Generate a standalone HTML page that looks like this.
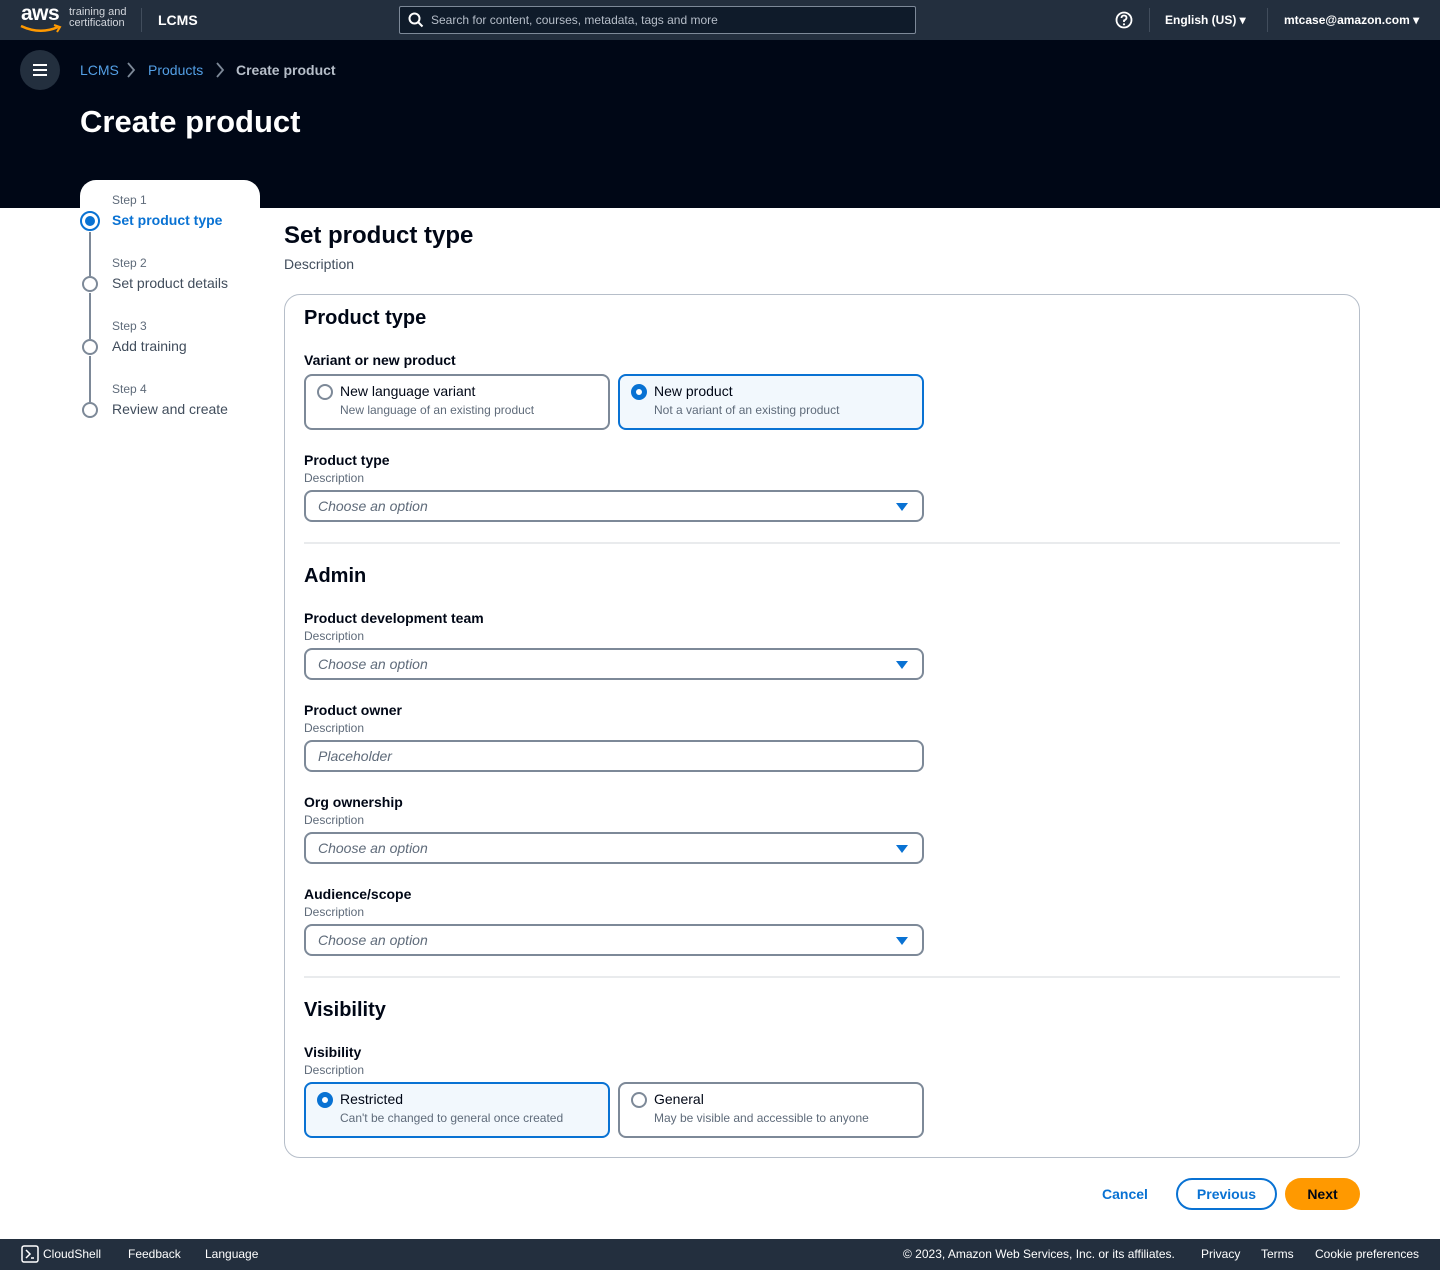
<!DOCTYPE html>
<html><head><meta charset="utf-8"><style>
*{box-sizing:border-box;margin:0;padding:0}
body{width:1440px;height:1270px;position:relative;font-family:"Liberation Sans",sans-serif;color:#000716;background:#fff;overflow:hidden}
.a{position:absolute}
.top{left:0;top:0;width:1440px;height:40px;background:#232f3e}
.hdr{left:0;top:40px;width:1440px;height:168px;background:#000716}
.wt{color:#fff}
.lbl{font-size:14px;font-weight:bold}
.desc{font-size:12px;color:#5f6b7a}
.sel{border:2px solid #7d8998;border-radius:8px;height:32px;width:620px;font-size:14px;font-style:italic;color:#5f6b7a;padding:6px 12px}
.sel .tri{position:absolute;right:14px;top:11px;width:0;height:0;border-left:6px solid transparent;border-right:6px solid transparent;border-top:8px solid #0972d3}
.tile{border:2px solid #7d8998;border-radius:8px;width:306px;height:56px}
.tile.on{border-color:#0972d3;background:#f2f8fd}
.tile .r{position:absolute;left:11px;top:8px;width:16px;height:16px;border-radius:50%;border:2px solid #7d8998;background:#fff}
.tile.on .r{border:5px solid #0972d3}
.tile .t{position:absolute;left:34px;top:7px;font-size:14px}
.tile .d{position:absolute;left:34px;top:27px;font-size:12px;color:#5f6b7a}
.h2{font-size:20px;font-weight:bold}
.hr{height:2px;background:#e9ebed;width:1036px;left:304px}
.step{font-size:12px;color:#5f6b7a}
.sn{font-size:14px;color:#414d5c}
.circ{width:16px;height:16px;border-radius:50%;border:2px solid #7d8998;background:#fff}
.vl{width:2px;background:#7d8998;left:89px}
.ft{left:0;top:1239px;width:1440px;height:31px;background:#232f3e;color:#fff;font-size:12px}
</style></head><body>
<div class="a top"></div>
<div class="a wt" style="left:21px;top:2px;font-size:21px;font-weight:bold;letter-spacing:-0.5px">aws</div>
<svg class="a" style="left:20px;top:24px" width="42" height="10"><path d="M1 2 Q20 11 38 3" stroke="#ff9900" stroke-width="2.5" fill="none"/><path d="M34 1 L40 3 L37 8" stroke="#ff9900" stroke-width="2" fill="none"/></svg>
<div class="a" style="left:69px;top:7px;font-size:11px;line-height:11px;color:#d1d5db">training and<br>certification</div>
<div class="a" style="left:141px;top:8px;width:1px;height:24px;background:#414d5c"></div>
<div class="a wt" style="left:158px;top:12px;font-size:14px;font-weight:bold">LCMS</div>
<div class="a" style="left:399px;top:6px;width:517px;height:28px;border:1px solid #7d8998;border-radius:2px;background:#0f1b2a"></div>
<svg class="a" style="left:408px;top:12px" width="16" height="16"><circle cx="6.5" cy="6.5" r="5" stroke="#fff" stroke-width="2" fill="none"/><path d="M10 10 L14.5 14.5" stroke="#fff" stroke-width="2"/></svg>
<div class="a" style="left:431px;top:13px;font-size:12px;color:#b6bec9">Search for content, courses, metadata, tags and more</div>
<svg class="a" style="left:1115px;top:11px" width="18" height="18"><circle cx="9" cy="9" r="7.5" stroke="#fff" stroke-width="1.8" fill="none"/><path d="M6.5 7 Q6.5 4.5 9 4.5 Q11.5 4.5 11.5 6.8 Q11.5 8.5 9 9.5 L9 11" stroke="#fff" stroke-width="1.8" fill="none"/><circle cx="9" cy="13.3" r="1.1" fill="#fff"/></svg>
<div class="a" style="left:1149px;top:8px;width:1px;height:24px;background:#414d5c"></div>
<div class="a wt" style="left:1165px;top:13px;font-size:12px;font-weight:bold">English (US) ▾</div>
<div class="a" style="left:1267px;top:8px;width:1px;height:24px;background:#414d5c"></div>
<div class="a wt" style="left:1284px;top:13px;font-size:12px;font-weight:bold">mtcase@amazon.com ▾</div>

<div class="a hdr"></div>
<div class="a" style="left:20px;top:50px;width:40px;height:40px;border-radius:50%;background:#232f3e"></div>
<div class="a" style="left:33px;top:64px;width:14px;height:2px;background:#fff;box-shadow:0 5px 0 #fff,0 10px 0 #fff"></div>
<div class="a" style="left:80px;top:62px;font-size:14px;color:#539fe5">LCMS</div>
<svg class="a" style="left:126px;top:62px" width="10" height="16"><path d="M2 1 L8 8 L2 15" stroke="#7d8998" stroke-width="1.8" fill="none"/></svg>
<div class="a" style="left:148px;top:62px;font-size:14px;color:#539fe5">Products</div>
<svg class="a" style="left:215px;top:62px" width="10" height="16"><path d="M2 1 L8 8 L2 15" stroke="#7d8998" stroke-width="1.8" fill="none"/></svg>
<div class="a" style="left:236px;top:62px;font-size:14px;font-weight:bold;color:#b6bec9">Create product</div>
<div class="a wt" style="left:80px;top:104px;font-size:31px;font-weight:bold">Create product</div>
<div class="a" style="left:80px;top:180px;width:180px;height:40px;background:#fff;border-radius:16px 16px 0 0"></div>

<div class="a step" style="left:112px;top:193px">Step 1</div>
<div class="a" style="left:80px;top:211px;width:20px;height:20px;border-radius:50%;border:2px solid #0972d3;background:#fff"></div>
<div class="a" style="left:85px;top:216px;width:10px;height:10px;border-radius:50%;background:#0972d3"></div>
<div class="a" style="left:112px;top:212px;font-size:14px;font-weight:bold;color:#0972d3">Set product type</div>
<div class="a vl" style="top:232px;height:44px"></div>
<div class="a step" style="left:112px;top:256px">Step 2</div>
<div class="a circ" style="left:82px;top:276px"></div>
<div class="a sn" style="left:112px;top:275px">Set product details</div>
<div class="a vl" style="top:293px;height:46px"></div>
<div class="a step" style="left:112px;top:319px">Step 3</div>
<div class="a circ" style="left:82px;top:339px"></div>
<div class="a sn" style="left:112px;top:338px">Add training</div>
<div class="a vl" style="top:356px;height:46px"></div>
<div class="a step" style="left:112px;top:382px">Step 4</div>
<div class="a circ" style="left:82px;top:402px"></div>
<div class="a sn" style="left:112px;top:401px">Review and create</div>

<div class="a" style="left:284px;top:222px;font-size:24px;font-weight:bold">Set product type</div>
<div class="a" style="left:284px;top:256px;font-size:14px;color:#414d5c">Description</div>
<div class="a" style="left:284px;top:294px;width:1076px;height:864px;border:1px solid #b6bec9;border-radius:16px"></div>

<div class="a h2" style="left:304px;top:307px">Product type</div>
<div class="a lbl" style="left:304px;top:352px">Variant or new product</div>
<div class="a tile" style="left:304px;top:374px"><div class="r"></div><div class="t">New language variant</div><div class="d">New language of an existing product</div></div>
<div class="a tile on" style="left:618px;top:374px"><div class="r"></div><div class="t">New product</div><div class="d">Not a variant of an existing product</div></div>
<div class="a lbl" style="left:304px;top:452px">Product type</div>
<div class="a desc" style="left:304px;top:471px">Description</div>
<div class="a sel" style="left:304px;top:490px">Choose an option<div class="tri"></div></div>
<div class="a hr" style="top:542px"></div>

<div class="a h2" style="left:304px;top:565px">Admin</div>
<div class="a lbl" style="left:304px;top:610px">Product development team</div>
<div class="a desc" style="left:304px;top:629px">Description</div>
<div class="a sel" style="left:304px;top:648px">Choose an option<div class="tri"></div></div>
<div class="a lbl" style="left:304px;top:702px">Product owner</div>
<div class="a desc" style="left:304px;top:721px">Description</div>
<div class="a sel" style="left:304px;top:740px">Placeholder</div>
<div class="a lbl" style="left:304px;top:794px">Org ownership</div>
<div class="a desc" style="left:304px;top:813px">Description</div>
<div class="a sel" style="left:304px;top:832px">Choose an option<div class="tri"></div></div>
<div class="a lbl" style="left:304px;top:886px">Audience/scope</div>
<div class="a desc" style="left:304px;top:905px">Description</div>
<div class="a sel" style="left:304px;top:924px">Choose an option<div class="tri"></div></div>
<div class="a hr" style="top:976px"></div>

<div class="a h2" style="left:304px;top:999px">Visibility</div>
<div class="a lbl" style="left:304px;top:1044px">Visibility</div>
<div class="a desc" style="left:304px;top:1063px">Description</div>
<div class="a tile on" style="left:304px;top:1082px"><div class="r"></div><div class="t">Restricted</div><div class="d">Can't be changed to general once created</div></div>
<div class="a tile" style="left:618px;top:1082px"><div class="r"></div><div class="t">General</div><div class="d">May be visible and accessible to anyone</div></div>

<div class="a" style="left:1102px;top:1186px;font-size:14px;font-weight:bold;color:#0972d3">Cancel</div>
<div class="a" style="left:1176px;top:1178px;width:101px;height:32px;border:2px solid #0972d3;border-radius:16px;text-align:center;line-height:28px;font-size:14px;font-weight:bold;color:#0972d3">Previous</div>
<div class="a" style="left:1285px;top:1178px;width:75px;height:32px;background:#ff9900;border-radius:16px;text-align:center;line-height:32px;font-size:14px;font-weight:bold;color:#000716">Next</div>

<div class="a ft"></div>
<svg class="a" style="left:21px;top:1245px" width="18" height="18"><rect x="1" y="1" width="16" height="16" rx="2" stroke="#fff" stroke-width="1.5" fill="none"/><path d="M5 5 L9 9 L5 13 M10 13 L13 13" stroke="#fff" stroke-width="1.5" fill="none"/></svg>
<div class="a wt" style="left:43px;top:1247px;font-size:12px">CloudShell</div>
<div class="a wt" style="left:128px;top:1247px;font-size:12px">Feedback</div>
<div class="a wt" style="left:205px;top:1247px;font-size:12px">Language</div>
<div class="a wt" style="left:903px;top:1247px;font-size:12px">© 2023, Amazon Web Services, Inc. or its affiliates.</div>
<div class="a wt" style="left:1201px;top:1247px;font-size:12px">Privacy</div>
<div class="a wt" style="left:1261px;top:1247px;font-size:12px">Terms</div>
<div class="a wt" style="left:1315px;top:1247px;font-size:12px">Cookie preferences</div>
</body></html>
